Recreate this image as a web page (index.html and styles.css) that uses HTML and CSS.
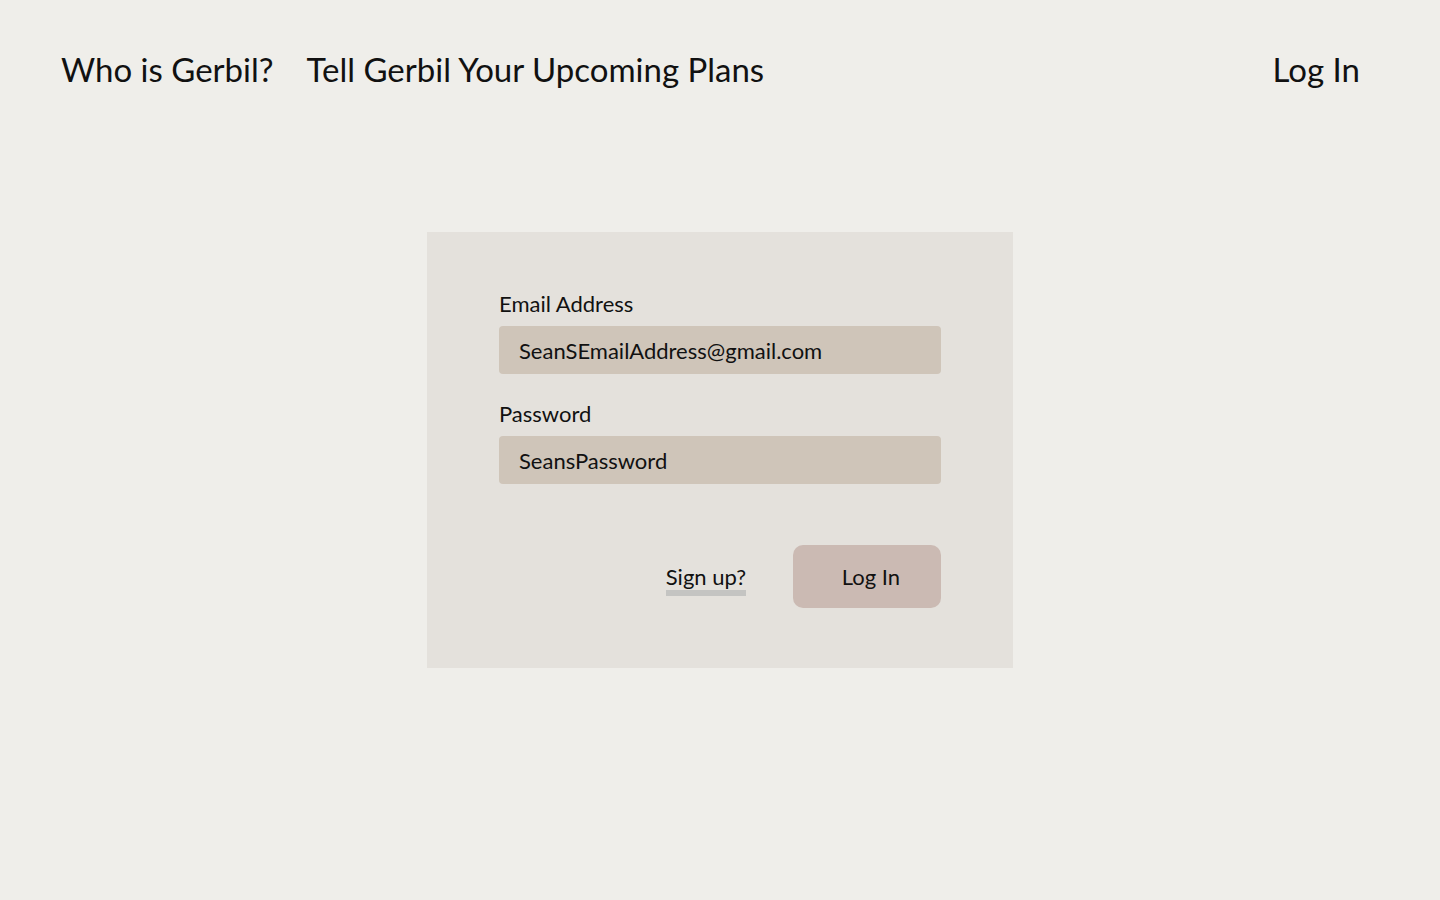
FILE: index.html
```html
<!DOCTYPE html>
<html lang="en">
<head>
<meta charset="utf-8">
<title>Gerbil - Log In</title>
<link rel="stylesheet" href="styles.css">
</head>
<body>
<header class="topbar">
  <nav class="nav-left">
    <a class="nav-link" href="#">Who is Gerbil?</a>
    <a class="nav-link" href="#">Tell Gerbil Your Upcoming Plans</a>
  </nav>
  <a class="nav-link" href="#">Log In</a>
</header>
<main class="main">
  <form class="card">
    <label class="field">
      <span class="label">Email Address</span>
      <span class="input">SeanSEmailAddress@gmail.com</span>
    </label>
    <label class="field">
      <span class="label">Password</span>
      <span class="input">SeansPassword</span>
    </label>
    <div class="actions">
      <a class="signup" href="#">Sign up?</a>
      <button class="btn" type="button">Log In</button>
    </div>
  </form>
</main>
</body>
</html>
```
FILE: styles.css
```css
* { box-sizing: border-box; }
html, body { margin: 0; padding: 0; }
body {
  background: #efeeea;
  color: #111;
  font-family: "Lato", "Open Sans", sans-serif;
  width: 1440px;
  height: 900px;
}
.topbar {
  display: flex;
  justify-content: space-between;
  align-items: center;
  padding: 48px 80px 0 61px;
  height: 90px;
}
.nav-left { display: flex; gap: 33px; }
.nav-link {
  color: #111;
  text-decoration: none;
  font-size: 33px;
  line-height: 40px;
}
.main {
  display: flex;
  justify-content: center;
  padding-top: 142px;
}
.card {
  width: 586px;
  height: 436px;
  background: #e4e1dc;
  padding: 58px 72px 60px;
  display: flex;
  flex-direction: column;
  gap: 26px;
}
.field { display: flex; flex-direction: column; gap: 8px; }
.label { font-size: 22px; line-height: 28px; }
.input {
  height: 48px;
  background: #cfc5b9;
  border-radius: 4px;
  padding: 0 20px;
  display: flex;
  align-items: center;
  font-size: 22px;
}
.actions {
  margin-top: 35px;
  display: flex;
  justify-content: flex-end;
  align-items: center;
  gap: 47px;
}
.signup {
  color: #111;
  text-decoration: none;
  font-size: 22px;
  line-height: 26px;
  border-bottom: 6px solid #c4c4c2;
  margin-top: 6px;
}
.btn {
  width: 148px;
  height: 63px;
  border: none;
  border-radius: 10px;
  background: #cbbab3;
  color: #111;
  font-family: inherit;
  font-size: 22px;
  padding: 0 0 0 8px;
}
```
